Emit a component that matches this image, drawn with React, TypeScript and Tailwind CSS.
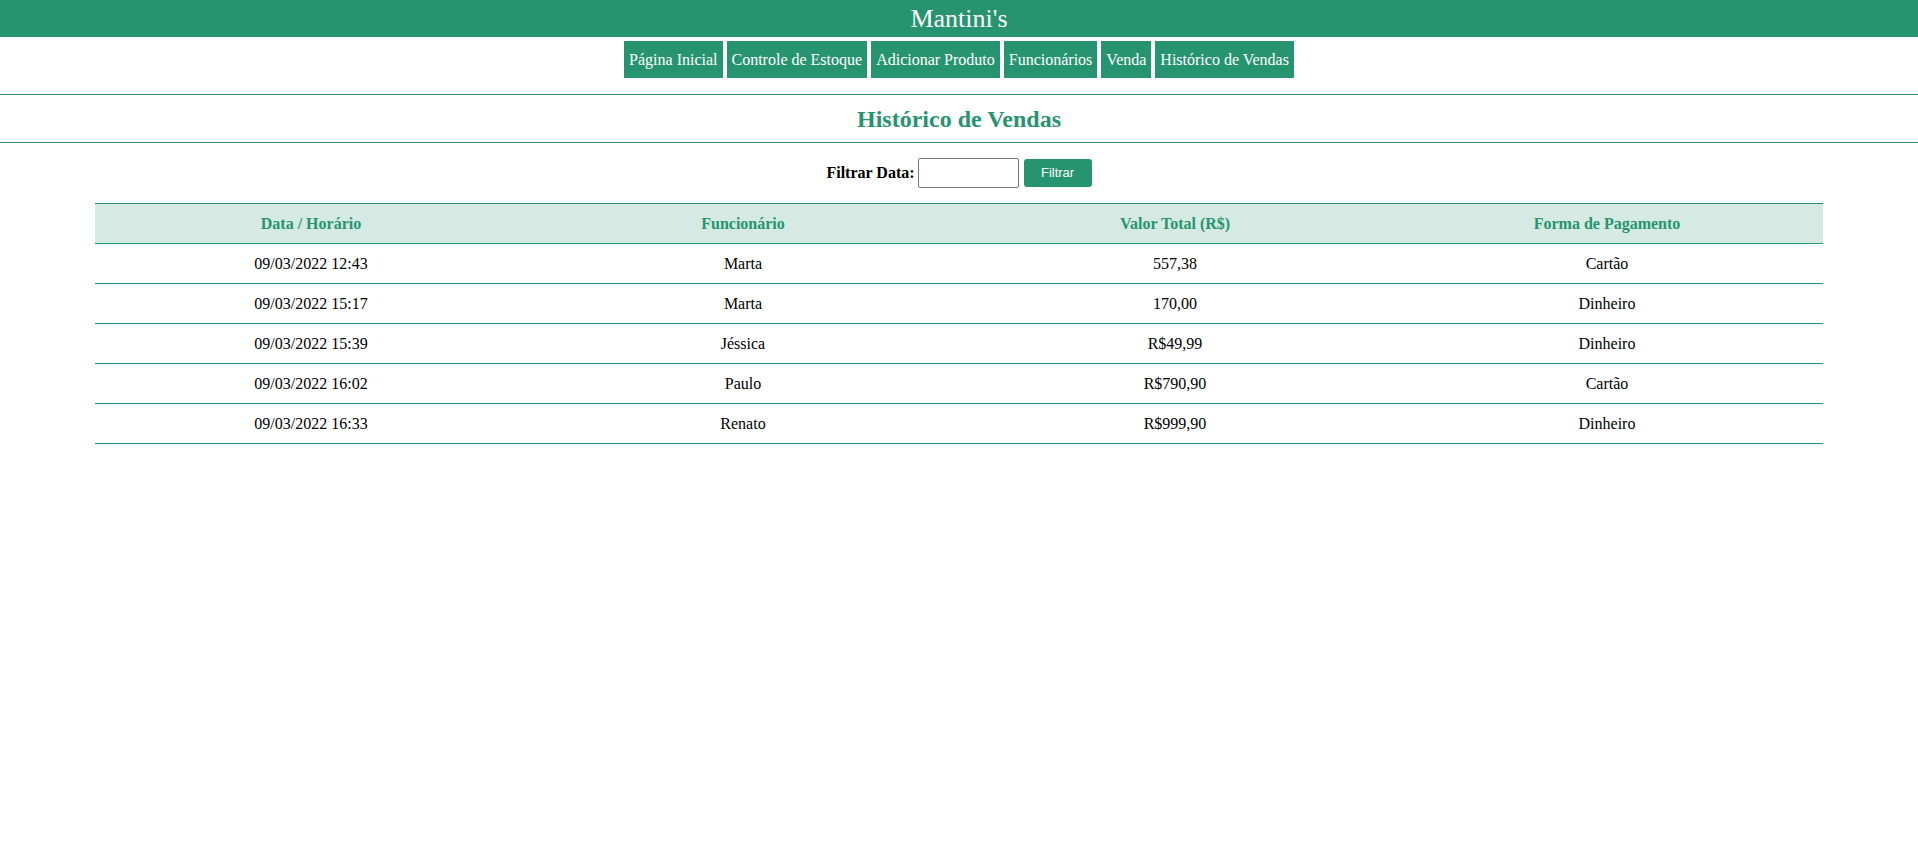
import React from "react"

const links = ["Página Inicial", "Controle de Estoque", "Adicionar Produto", "Funcionários", "Venda", "Histórico de Vendas"]

const vendas = [
  { data: "09/03/2022 12:43", funcionario: "Marta", valor: "557,38", pagamento: "Cartão" },
  { data: "09/03/2022 15:17", funcionario: "Marta", valor: "170,00", pagamento: "Dinheiro" },
  { data: "09/03/2022 15:39", funcionario: "Jéssica", valor: "R$49,99", pagamento: "Dinheiro" },
  { data: "09/03/2022 16:02", funcionario: "Paulo", valor: "R$790,90", pagamento: "Cartão" },
  { data: "09/03/2022 16:33", funcionario: "Renato", valor: "R$999,90", pagamento: "Dinheiro" },
]

export default function App() {
  return (
    <div className="min-h-[862px] bg-white font-['Liberation_Serif',serif] text-black">
      <header className="h-[37px] bg-[#279470] text-white text-[26px] flex items-center justify-center">
        Mantini's
      </header>

      <nav className="flex justify-center gap-[4px] pt-[4px] pb-[16px] border-b border-[#2f8a6f]">
        {links.map((l) => (
          <a key={l} className="h-[37px] px-[5px] bg-[#279470] text-white text-[16px] flex items-center">
            {l}
          </a>
        ))}
      </nav>

      <h2 className="h-[48px] flex items-center justify-center text-[24px] font-bold text-[#279470] border-b border-[#2f8a6f]">
        Histórico de Vendas
      </h2>

      <div className="flex justify-center items-center mt-[15px] mb-[15px]">
        <label className="text-[16px] font-bold mr-[3px]">Filtrar Data:</label>
        <input
          type="text"
          className="w-[101px] h-[30px] border border-[#767676] rounded-[2px] px-1 outline-none"
        />
        <button className="ml-[5px] w-[68px] h-[28px] bg-[#279470] text-white rounded-[3px] text-[13px] font-['Liberation_Sans',sans-serif]">
          Filtrar
        </button>
      </div>

      <table className="w-[1728px] mx-auto table-fixed border-collapse">
        <thead>
          <tr className="bg-[#d4eae2]">
            <th className="h-[40px] border-y border-[#279470] text-[#279470] font-bold">Data / Horário</th>
            <th className="h-[40px] border-y border-[#279470] text-[#279470] font-bold">Funcionário</th>
            <th className="h-[40px] border-y border-[#279470] text-[#279470] font-bold">Valor Total (R$)</th>
            <th className="h-[40px] border-y border-[#279470] text-[#279470] font-bold">Forma de Pagamento</th>
          </tr>
        </thead>
        <tbody>
          {vendas.map((v, i) => (
            <tr key={i}>
              <td className="h-[40px] border-b border-[#279470] text-center">{v.data}</td>
              <td className="h-[40px] border-b border-[#279470] text-center">{v.funcionario}</td>
              <td className="h-[40px] border-b border-[#279470] text-center">{v.valor}</td>
              <td className="h-[40px] border-b border-[#279470] text-center">{v.pagamento}</td>
            </tr>
          ))}
        </tbody>
      </table>
    </div>
  )
}
